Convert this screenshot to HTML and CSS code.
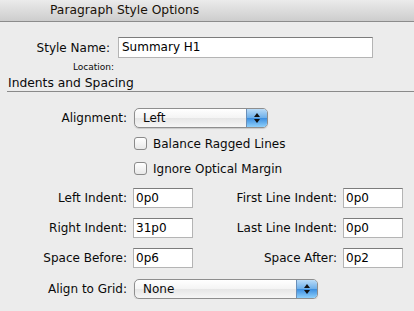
FILE: index.html
```html
<!DOCTYPE html>
<html lang="en">
<head>
  <meta charset="UTF-8" />
  <title>Paragraph Style Options</title>
  <link rel="stylesheet" href="styles.css">
</head>
<body>
  <div class="titlebar">Paragraph Style Options</div>

  <div class="name-row">
    <label class="name-label">Style Name:</label>
    <div class="text-field name-field">Summary H1</div>
  </div>
  <div class="location">Location:</div>

  <div class="section-title">Indents and Spacing</div>

  <div class="row">
    <label class="row-label">Alignment:</label>
    <div class="popup align-popup">
      <span>Left</span>
      <span class="stepper"><i class="up"></i><i class="down"></i></span>
    </div>
  </div>

  <div class="check-row first">
    <span class="checkbox"></span>
    <span>Balance Ragged Lines</span>
  </div>
  <div class="check-row">
    <span class="checkbox"></span>
    <span>Ignore Optical Margin</span>
  </div>

  <div class="fields">
    <label>Left Indent:</label>
    <div class="text-field">0p0</div>
    <label>First Line Indent:</label>
    <div class="text-field">0p0</div>

    <label>Right Indent:</label>
    <div class="text-field">31p0</div>
    <label>Last Line Indent:</label>
    <div class="text-field">0p0</div>

    <label>Space Before:</label>
    <div class="text-field">0p6</div>
    <label>Space After:</label>
    <div class="text-field">0p2</div>
  </div>

  <div class="row grid-row">
    <label class="row-label">Align to Grid:</label>
    <div class="popup grid-popup">
      <span>None</span>
      <span class="stepper"><i class="up"></i><i class="down"></i></span>
    </div>
  </div>
</body>
</html>
```

FILE: styles.css
```css
body {
  margin: 0;
  background: #ececec;
  font-family: "DejaVu Sans", sans-serif;
  font-size: 12px;
  color: #0a0a0a;
}
.titlebar {
  height: 21px;
  line-height: 21px;
  padding-left: 50px;
  background: linear-gradient(#ebebeb, #cdcdcd);
  border-bottom: 1px solid #8c8c8c;
  color: #1a1208;
  font-size: 12.3px;
}
.name-row {
  display: flex;
  align-items: center;
  margin-top: 15px;
  height: 21px;
}
.name-label {
  width: 110px;
  text-align: right;
  margin-right: 8px;
}
.text-field {
  box-sizing: border-box;
  background: #fff;
  border: 1px solid #b4b4b4;
  border-top-color: #7c7c7c;
  height: 20px;
  line-height: 18px;
  padding-left: 3px;
  color: #000;
}
.name-field {
  width: 255px;
  height: 21px;
  line-height: 19px;
}
.location {
  margin-top: 4px;
  padding-left: 73px;
  font-size: 9px;
  line-height: 11px;
}
.section-title {
  margin-top: 3px;
  margin-left: 7px;
  padding-left: 1px;
  height: 15px;
  line-height: 14px;
  font-size: 12.3px;
  border-bottom: 1px solid #8a8a8a;
}
.row {
  display: flex;
  align-items: center;
  height: 20px;
  margin-top: 16px;
}
.row-label {
  width: 127px;
  text-align: right;
  margin-right: 7px;
}
.popup {
  box-sizing: border-box;
  display: flex;
  align-items: center;
  justify-content: space-between;
  height: 20px;
  border: 1px solid #8e8e8e;
  border-radius: 5px;
  background: linear-gradient(#ffffff, #f4f4f4 50%, #e6e6e6 51%, #f6f6f6);
  box-shadow: 0 1px 1px rgba(0,0,0,0.15);
  padding-left: 8px;
  overflow: hidden;
}
.align-popup { width: 134px; }
.grid-popup { width: 184px; }
.stepper {
  display: flex;
  flex-direction: column;
  align-items: center;
  justify-content: center;
  gap: 2px;
  width: 20px;
  align-self: stretch;
  background: linear-gradient(#b9dbf7, #6fb0ea 48%, #3d8fe0 52%, #8fd0fb);
  border-left: 1px solid #6a8fb8;
}
.stepper i {
  width: 0;
  height: 0;
  border-left: 3px solid transparent;
  border-right: 3px solid transparent;
}
.stepper .up { border-bottom: 4px solid #111; }
.stepper .down { border-top: 4px solid #111; }
.check-row {
  display: flex;
  align-items: center;
  gap: 6px;
  height: 13px;
  padding-left: 134px;
  margin-top: 12px;
}
.check-row.first { margin-top: 9px; }
.checkbox {
  box-sizing: border-box;
  width: 13px;
  height: 13px;
  border: 1px solid #8a8a8a;
  border-radius: 3px;
  background: linear-gradient(#ffffff, #e8e8e8);
}
.fields {
  display: grid;
  grid-template-columns: 127px 60px 138px 60px;
  grid-auto-rows: 20px;
  column-gap: 6px;
  row-gap: 10px;
  align-items: center;
  margin-top: 13px;
}
.fields label { text-align: right; }
.fields .text-field { padding-left: 2px; }
.grid-row { margin-top: 11px; }
```
